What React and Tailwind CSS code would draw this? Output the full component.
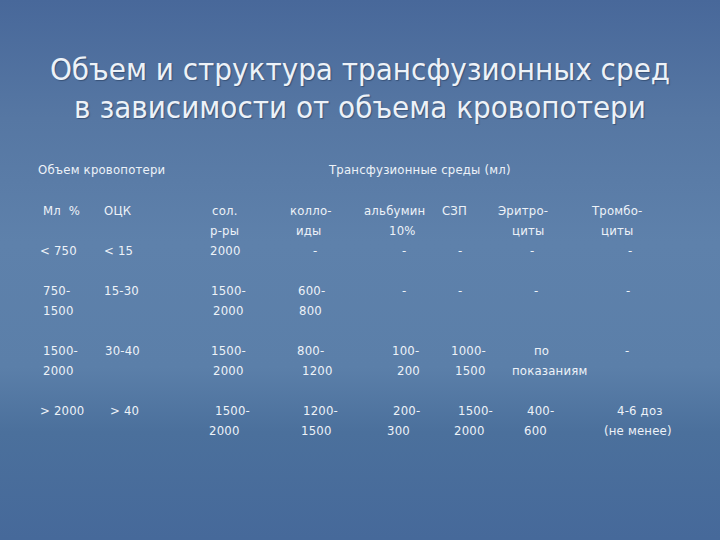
import React from "react";

// each column: width class + lines per row, every line carries its own indent
const rows = [
  {
    h: "h-[60px]",
    cells: [
      [["Мл  %", "pl-[5px]"], ["", ""], ["< 750", "pl-[2px]"]],
      [["ОЦК", "pl-[4px]"], ["", ""], ["< 15", "pl-[4px]"]],
      [["сол.", "pl-[7px]"], ["р-ры", "pl-[5px]"], ["2000", "pl-[5px]"]],
      [["колло-", "pl-[5px]"], ["иды", "pl-[11px]"], ["-", "pl-[28px]"]],
      [["альбумин", "pl-[4px]"], ["10%", "pl-[29px]"], ["-", "pl-[42px]"]],
      [["СЗП", "pl-[7px]"], ["", ""], ["-", "pl-[23px]"]],
      [["Эритро-", "pl-[3px]"], ["циты", "pl-[17px]"], ["-", "pl-[35px]"]],
      [["Тромбо-", "pl-[7px]"], ["циты", "pl-[16px]"], ["-", "pl-[43px]"]],
    ],
  },
  {
    h: "h-[40px]",
    cells: [
      [["750-", "pl-[5px]"], ["1500", "pl-[5px]"]],
      [["15-30", "pl-[4px]"], ["", ""]],
      [["1500-", "pl-[6px]"], ["2000", "pl-[8px]"]],
      [["600-", "pl-[13px]"], ["800", "pl-[14px]"]],
      [["-", "pl-[42px]"], ["", ""]],
      [["-", "pl-[23px]"], ["", ""]],
      [["-", "pl-[39px]"], ["", ""]],
      [["-", "pl-[41px]"], ["", ""]],
    ],
  },
  {
    h: "h-[40px]",
    cells: [
      [["1500-", "pl-[5px]"], ["2000", "pl-[5px]"]],
      [["30-40", "pl-[5px]"], ["", ""]],
      [["1500-", "pl-[6px]"], ["2000", "pl-[8px]"]],
      [["800-", "pl-[12px]"], ["1200", "pl-[17px]"]],
      [["100-", "pl-[32px]"], ["200", "pl-[37px]"]],
      [["1000-", "pl-[16px]"], ["1500", "pl-[20px]"]],
      [["по", "pl-[39px]"], ["показаниям", "pl-[17px]"]],
      [["-", "pl-[40px]"], ["", ""]],
    ],
  },
  {
    h: "h-[40px]",
    cells: [
      [["> 2000", "pl-[2px]"], ["", ""]],
      [["> 40", "pl-[10px]"], ["", ""]],
      [["1500-", "pl-[10px]"], ["2000", "pl-[4px]"]],
      [["1200-", "pl-[18px]"], ["1500", "pl-[16px]"]],
      [["200-", "pl-[33px]"], ["300", "pl-[27px]"]],
      [["1500-", "pl-[23px]"], ["2000", "pl-[19px]"]],
      [["400-", "pl-[32px]"], ["600", "pl-[29px]"]],
      [["4-6 доз", "pl-[32px]"], ["(не менее)", "pl-[19px]"]],
    ],
  },
];

const widths = ["w-[62px]", "w-[105px]", "w-[80px]", "w-[75px]", "w-[75px]", "w-[60px]", "w-[90px]", "w-[95px]"];

export default function App() {
  return (
    <div
      className="w-[720px] h-[540px] overflow-hidden bg-[linear-gradient(180deg,#48689a_0%,#5677a3_22%,#5e81ab_45%,#5b7fa9_68%,#4b709c_80%,#46699a_100%)] text-[#edf2f8]"
      style={{ fontFamily: '"DejaVu Sans Condensed", "DejaVu Sans", sans-serif' }}
    >
      <div className="pt-[50px] text-center text-[31px] leading-[38px] [text-shadow:1px_1px_1px_rgba(30,50,80,0.5)]">
        <p>Объем и структура трансфузионных сред</p>
        <p>в зависимости от объема кровопотери</p>
      </div>

      <div className="mt-[34px] flex text-[13px] leading-[20px] tracking-[0.2px] pl-[38px]">
        <p className="w-[291px]">Объем кровопотери</p>
        <p>Трансфузионные среды (мл)</p>
      </div>

      <div className="mt-[21px] pl-[38px] flex flex-col gap-[20px] text-[13px] leading-[20px] tracking-[0.2px]">
        {rows.map((row, ri) => (
          <div key={ri} className={`flex ${row.h}`}>
            {row.cells.map((cell, ci) => (
              <div key={ci} className={`${widths[ci]} shrink-0 flex flex-col`}>
                {cell.map(([txt, pad], li) => (
                  <p key={li} className={`h-[20px] whitespace-pre ${pad}`}>
                    {txt}
                  </p>
                ))}
              </div>
            ))}
          </div>
        ))}
      </div>
    </div>
  );
}
